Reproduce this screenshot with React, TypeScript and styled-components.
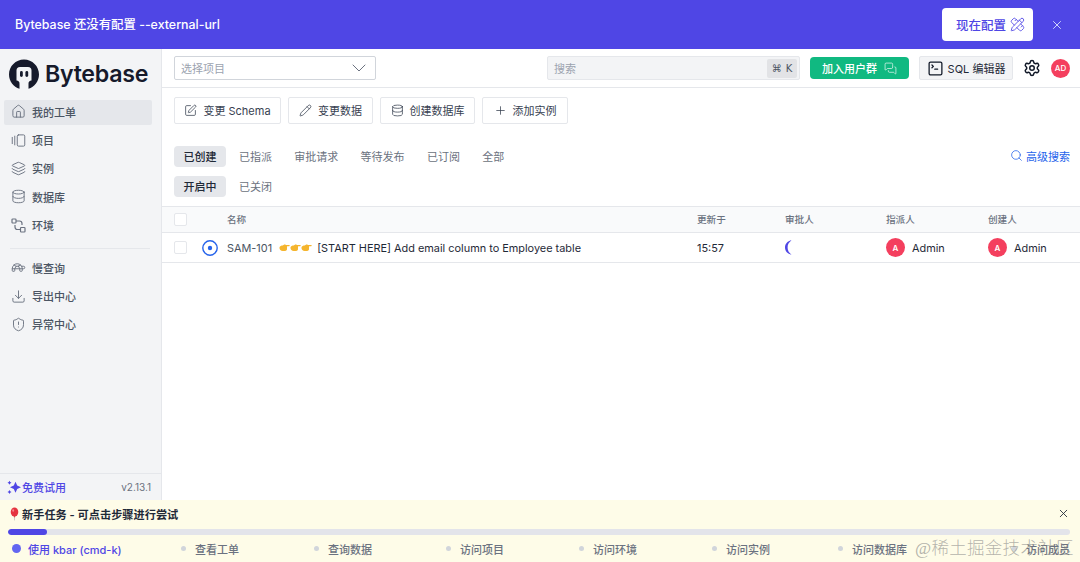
import React from "react";
import styled, { createGlobalStyle } from "styled-components";
import {
  House, GalleryHorizontalEnd, Layers, Database, Turtle, Download, ShieldAlert,
  SquarePen, Pencil, Plus, Search, ChevronDown, Settings, X, PencilRuler, MessagesSquare, SquareTerminal,
} from "lucide-react";

const Global = createGlobalStyle`
  html, body { margin: 0; padding: 0; height: 100%; background: #fff; }
  body { font-family: Inter, "Noto Sans CJK SC", sans-serif; color: #374151; overflow: hidden; }
  #root { height: 100%; }
  * { box-sizing: border-box; }
`;

const Page = styled.div`
  position: relative; width: 1080px; height: 562px; display: flex; flex-direction: column; overflow: hidden;
`;
const Banner = styled.div`
  height: 49px; flex: none; background: #4f46e5; color: #fff; display: flex; align-items: center;
  padding: 0 16px 2px 15px; font-size: 12.4px; font-weight: 500;
`;
const BannerText = styled.div`flex: 1;`;
const ConfigButton = styled.div`
  width: 91px; height: 33px; background: #fff; border-radius: 4px; color: #4f46e5; display: flex;
  align-items: center; justify-content: center; gap: 4px; font-size: 12.5px; font-weight: 500; margin-right: 17px; margin-top: 2px;
  padding-left: 6px;
`;
const BannerClose = styled.div`display: flex; margin-top: 2px; color: #e0e7ff;`;
const Body = styled.div`flex: 1; display: flex; min-height: 0;`;
const Sidebar = styled.aside`
  width: 162px; flex: none; background: #f3f4f6; border-right: 1px solid #e5e7eb; display: flex; flex-direction: column;
`;
const LogoRow = styled.div`
  height: 50.7px; display: flex; align-items: center; padding: 0 0 0 9px; gap: 6px; flex: none;
`;
const LogoText = styled.span`
  font-size: 23.2px; font-weight: 600; color: #161a2b; letter-spacing: -0.3px; line-height: 1;
`;
const Nav = styled.nav`display: flex; flex-direction: column; padding: 0 9px 0 4px; flex: 1;`;
const NavItem = styled.div<{ $active?: boolean }>`
  height: 25px; margin-bottom: 3.4px; display: flex; align-items: center; gap: 6px; padding: 0 0 1px 7px; border-radius: 2px;
  background: ${(p) => (p.$active ? "#e5e7eb" : "transparent")};
  font-size: 11px; font-weight: 500; color: #4b5563;
  svg { color: #6b7280; flex: none; }
`;
const NavDivider = styled.div`height: 1px; background: #e5e7eb; margin: 6px 2px 7px 6px;`;
const SideFooter = styled.div`
  height: 27px; flex: none; border-top: 1px solid #e5e7eb; display: flex; align-items: center; justify-content: space-between;
  padding: 0 10px 0 7px;
`;
const Trial = styled.span`
  display: flex; align-items: center; gap: 0; font-size: 11px; color: #4f46e5; font-weight: 500;
`;
const Version = styled.span`font-size: 10px; color: #6b7280;`;
const Main = styled.main`flex: 1; min-width: 0; display: flex; flex-direction: column;`;
const TopBar = styled.header`
  height: 39px; flex: none; border-bottom: 1px solid #e5e7eb; display: flex; align-items: center; padding: 0 10px 0 12px;
`;
const ProjectSelect = styled.div`
  width: 202px; height: 24px; border: 1px solid #d1d5db; border-radius: 2px; display: flex; align-items: center;
  justify-content: space-between; padding: 0 4px 0 6px; font-size: 11px; color: #9ca3af; background: #fff;
  svg { color: #6b7280; }
`;
const SearchBox = styled.div`
  width: 253px; height: 24px; margin-left: auto; border: 1px solid #e5e7eb; background: #f3f4f6; border-radius: 2px;
  display: flex; align-items: center; justify-content: space-between; padding: 0 2px 0 6px; font-size: 11px; color: #9ca3af;
`;
const Kbd = styled.span`
  width: 30px; height: 19px; background: #e2e3e6; border-radius: 2px; color: #4b5563; font-size: 10px; font-weight: 500;
  display: flex; align-items: center; justify-content: center; gap: 4px; font-family: "DejaVu Sans", sans-serif;
`;
const JoinButton = styled.div`
  width: 99px; height: 22px; margin-left: 10px; background: #10b981; color: #fff; border-radius: 4px; font-size: 11px; font-weight: 500;
  display: flex; align-items: center; justify-content: center; gap: 7px;
`;
const SqlButton = styled.div`
  width: 94px; height: 24px; margin-left: 10px; background: #f3f4f6; border: 1px solid #e5e7eb; border-radius: 2px; color: #1f2937;
  display: flex; align-items: center; justify-content: center; gap: 4px; font-size: 11px; font-weight: 400;
`;
const GearWrap = styled.div`display: flex; margin-left: 10px; color: #111827;`;
const HeaderAvatar = styled.div`
  width: 19px; height: 19px; margin-left: 10px; border-radius: 50%; background: #f43f5e; color: #fff; font-size: 8px; font-weight: 500;
  display: flex; align-items: center; justify-content: center;
`;
const Actions = styled.div`display: flex; gap: 7px; padding: 9px 0 0 12px; height: 58px; flex: none;`;
const ActionButton = styled.div<{ $w: number }>`
  width: ${(p) => p.$w}px; height: 27px; border: 1px solid #e5e7eb; border-radius: 2px; background: #fff; color: #374151;
  display: flex; align-items: center; justify-content: center; gap: 6px; font-size: 11px; font-weight: 400; padding-bottom: 1px;
  svg { color: #374151; flex: none; }
`;
const Tabs = styled.div`
  display: flex; align-items: center; height: 21px; padding: 0 10px 0 12px; gap: 13px; flex: none;
`;
const SubTabs = styled(Tabs)`margin-top: 9px;`;
const Tab = styled.div<{ $active?: boolean }>`
  height: 21px; padding: 0 ${(p) => (p.$active ? "9.5px" : "0")} 2px; border-radius: 4px; display: flex; align-items: center; font-size: 11px;
  font-weight: ${(p) => (p.$active ? 500 : 400)}; color: ${(p) => (p.$active ? "#1f2937" : "#6b7280")};
  background: ${(p) => (p.$active ? "#e5e7eb" : "transparent")};
  margin-right: ${(p) => (p.$active ? "0" : "9.3px")};
`;
const AdvancedSearch = styled.div`
  margin-left: auto; display: flex; align-items: center; gap: 3px; color: #2563eb; font-size: 11px; font-weight: 400; padding-bottom: 2px;
`;
const grid = "12px 41px 470px 88px 101px 102px 1fr";
const HeadRow = styled.div`
  margin-top: 9px; height: 27px; flex: none; display: grid; grid-template-columns: ${grid}; align-items: center; padding: 0 0 1px 12px;
  background: #f9fafb; border-top: 1px solid #e5e7eb; border-bottom: 1px solid #e5e7eb; font-size: 9.6px; font-weight: 500; color: #6b7280;
`;
const DataRow = styled.div`
  height: 30px; flex: none; display: grid; grid-template-columns: ${grid}; align-items: center; padding-left: 12px;
  border-bottom: 1px solid #e5e7eb; font-size: 10.9px; color: #1f2937; font-weight: 400;
`;
const Check = styled.span`
  width: 13px; height: 13px; border: 1px solid #e5e7eb; border-radius: 2px; background: #fff; display: block;
`;
const Name = styled.div`display: flex; align-items: center; white-space: nowrap;`;
const IssueId = styled.span`color: #4b5563; margin-right: 7px;`;
const Hands = styled.span`display: flex; margin-right: 2px;`;
const StatusCell = styled.div`display: flex; justify-content: flex-end; padding-right: 9px;`;
const Person = styled.div`display: flex; align-items: center; gap: 7px;`;
const RowAvatar = styled.span`
  width: 19px; height: 19px; border-radius: 50%; background: #f43f5e; color: #fff; font-size: 8px; font-weight: 600;
  display: flex; align-items: center; justify-content: center;
`;
const Quickstart = styled.section`
  height: 62px; flex: none; background: #fefce8; display: flex; flex-direction: column; padding: 0 10px 0 8px;
`;
const QuickHead = styled.div`
  height: 28px; display: flex; align-items: center; justify-content: space-between; font-size: 11.2px; font-weight: 600; color: #1f2937;
  padding-bottom: 1px; svg { color: #1f2937; }
`;
const QuickTitle = styled.span`display: flex; align-items: center; gap: 2px; padding-left: 1px;`;
const Progress = styled.div`height: 6px; border-radius: 3px; background: #e3e4ea; margin-top: 1px; overflow: hidden; flex: none;`;
const ProgressFill = styled.div`height: 100%; border-radius: 3px; background: #4f46e5;`;
const Steps = styled.div`display: flex; align-items: center; height: 27px; font-size: 11px; font-weight: 500; color: #6b7280;`;
const Step = styled.div<{ $w: number; $current?: boolean }>`
  width: ${(p) => p.$w}px; flex: none; display: flex; align-items: center; white-space: nowrap; gap: ${(p) => (p.$current ? "7px" : "9px")};
  color: ${(p) => (p.$current ? "#4f46e5" : "#6b7280")};
`;
const StepDot = styled.span<{ $current?: boolean }>`
  flex: none; border-radius: 50%; background: ${(p) => (p.$current ? "#6366f1" : "#d1d5db")};
  width: ${(p) => (p.$current ? "9px" : "5px")}; height: ${(p) => (p.$current ? "9px" : "5px")};
  margin-left: ${(p) => (p.$current ? "4px" : "0")};
`;
const Watermark = styled.div`
  position: absolute; left: 915px; top: 534px; font-family: "Liberation Serif", "Noto Sans CJK SC", serif; font-size: 17.5px;
  font-weight: 300; color: rgba(130, 130, 130, 0.6); white-space: nowrap; letter-spacing: 0.3px;
`;

const LogoMark = () => (
  <svg width="30" height="31" viewBox="0 0 30 31">
    <path d="M15 0.5C6.7 0.5 0 7.2 0 15.5c0 6.8 4.5 12.5 10.500 14.300V25a3 3 0 0 0-3-3.400V11.500a3.500 3.500 0 0 1 3.500-3.500h8a3.500 3.500 0 0 1 3.500 3.500v10a3 3 0 0 0-3 3.400v4.900C25.500 28 30 22.300 30 15.500 30 7.200 23.300 0.500 15 0.500Z" fill="#161a2b" />
    <rect x="11" y="12" width="2.800" height="6" rx="1.400" fill="#161a2b" />
    <rect x="16.400" y="12" width="2.800" height="6" rx="1.400" fill="#161a2b" />
  </svg>
);
const EnvIcon = () => (
  <svg width="15" height="15" viewBox="0 0 15 15" fill="none" stroke="currentColor" strokeWidth="1.200" strokeLinejoin="round">
    <rect x="1" y="1" width="4" height="4" rx="0.800" />
    <rect x="9.500" y="9.500" width="4.500" height="4.500" rx="0.800" />
    <path d="M5 3h3.500a2.500 2.500 0 0 1 2.500 2.500V7M9.500 11.500H6.500A2.500 2.500 0 0 1 4 9V7" />
  </svg>
);
const Sparkle = () => (
  <svg width="15" height="15" viewBox="0 0 15 15" fill="#4f46e5">
    <path d="M8.500 1.800l1.700 3.800 3.800 1.700-3.800 1.700-1.700 3.800-1.700-3.800-3.800-1.700 3.800-1.700z" />
    <path d="M2.500 0.800l.7 1.300 1.300.7-1.300.7-.7 1.300-.7-1.300-1.300-.7 1.300-.7zM2.500 10l.7 1.300 1.300.7-1.300.7-.7 1.300-.7-1.300-1.300-.7 1.300-.7z" />
  </svg>
);
const Hand = () => (
  <svg width="11" height="9" viewBox="0 0 12 9">
    <path d="M0.500 4.500C1 3 2.500 2.400 4 2.400c1-.6 1.800-1.300 2.600-1.500.5 0 .6.500.3 1h4.300c.7 0 .7 1 0 1.100H8.800l-.1 3.800c-.2 1-1 1.400-2 1.400H4C2 8.200 0.400 6.800 0.500 4.500Z" fill="#f5b52e" />
  </svg>
);
const Balloon = () => (
  <svg width="11" height="14" viewBox="0 0 11 14">
    <ellipse cx="5.500" cy="5" rx="3.800" ry="4.500" fill="#e5343f" />
    <path d="M4.800 9.300h1.400L6 10.400H5z" fill="#c92a35" />
    <path d="M5.500 10.400v3" stroke="#b7b7b7" strokeWidth="0.700" />
    <ellipse cx="4.200" cy="3.500" rx="0.900" ry="1.300" fill="#f58b90" />
  </svg>
);
const StatusIcon = () => (
  <svg width="16" height="16" viewBox="0 0 16 16">
    <circle cx="8" cy="8" r="7.200" fill="#fff" stroke="#2563eb" strokeWidth="1.400" />
    <circle cx="8" cy="8" r="2.200" fill="#2563eb" />
  </svg>
);
const Crescent = () => (
  <svg width="7" height="15" viewBox="0 0 7 15" style={{ display: "block" }}>
    <path d="M6.500 0.300C2.700 1 0 3.800 0 7.500s2.700 6.500 6.500 7.200C3.800 12.500 2.600 10.500 2.600 7.500S3.800 2.500 6.500 0.300Z" fill="#4f46e5" />
  </svg>
);

const nav = [
  { label: "项目", icon: <GalleryHorizontalEnd size={15} strokeWidth={1.500} /> },
  { label: "实例", icon: <Layers size={15} strokeWidth={1.500} /> },
  { label: "数据库", icon: <Database size={15} strokeWidth={1.500} /> },
  { label: "环境", icon: <EnvIcon /> },
];
const nav2 = [
  { label: "慢查询", icon: <Turtle size={15} strokeWidth={1.500} /> },
  { label: "导出中心", icon: <Download size={15} strokeWidth={1.500} /> },
  { label: "异常中心", icon: <ShieldAlert size={15} strokeWidth={1.500} /> },
];
const steps: [string, number][] = [
  ["查看工单", 133], ["查询数据", 132], ["访问项目", 133], ["访问环境", 133], ["访问实例", 126], ["访问数据库", 174], ["访问成员", 60],
];

export default function App() {
  return (
    <Page>
      <Global />
      <Banner>
        <BannerText>Bytebase 还没有配置 --external-url</BannerText>
        <ConfigButton>现在配置 <PencilRuler size={15} strokeWidth={1.400} /></ConfigButton>
        <BannerClose><X size={14} strokeWidth={1.500} /></BannerClose>
      </Banner>
      <Body>
        <Sidebar>
          <LogoRow><LogoMark /><LogoText>Bytebase</LogoText></LogoRow>
          <Nav>
            <NavItem $active><House size={15} strokeWidth={1.500} />我的工单</NavItem>
            {nav.map((n) => <NavItem key={n.label}>{n.icon}{n.label}</NavItem>)}
            <NavDivider />
            {nav2.map((n) => <NavItem key={n.label}>{n.icon}{n.label}</NavItem>)}
          </Nav>
          <SideFooter>
            <Trial><Sparkle />免费试用</Trial>
            <Version>v2.13.1</Version>
          </SideFooter>
        </Sidebar>
        <Main>
          <TopBar>
            <ProjectSelect>选择项目<ChevronDown size={24} strokeWidth={1} /></ProjectSelect>
            <SearchBox>搜索<Kbd><span>⌘</span><span>K</span></Kbd></SearchBox>
            <JoinButton>加入用户群<MessagesSquare size={13} strokeWidth={1.200} /></JoinButton>
            <SqlButton><SquareTerminal size={17} strokeWidth={1.800} color="#111827" />SQL 编辑器</SqlButton>
            <GearWrap><Settings size={18} strokeWidth={2} /></GearWrap>
            <HeaderAvatar>AD</HeaderAvatar>
          </TopBar>
          <Actions>
            <ActionButton $w={107}><SquarePen size={13} strokeWidth={1.400} />变更 Schema</ActionButton>
            <ActionButton $w={85}><Pencil size={13} strokeWidth={1.400} />变更数据</ActionButton>
            <ActionButton $w={95}><Database size={13} strokeWidth={1.400} />创建数据库</ActionButton>
            <ActionButton $w={86}><Plus size={13} strokeWidth={1.400} />添加实例</ActionButton>
          </Actions>
          <Tabs>
            <Tab $active>已创建</Tab>
            <Tab>已指派</Tab>
            <Tab>审批请求</Tab>
            <Tab>等待发布</Tab>
            <Tab>已订阅</Tab>
            <Tab>全部</Tab>
            <AdvancedSearch><Search size={13} strokeWidth={1.400} />高级搜索</AdvancedSearch>
          </Tabs>
          <SubTabs>
            <Tab $active>开启中</Tab>
            <Tab>已关闭</Tab>
          </SubTabs>
          <HeadRow>
            <Check /><span /><span>名称</span><span>更新于</span><span>审批人</span><span>指派人</span><span>创建人</span>
          </HeadRow>
          <DataRow>
            <Check />
            <StatusCell><StatusIcon /></StatusCell>
            <Name>
              <IssueId>SAM-101</IssueId>
              <Hands><Hand /><Hand /><Hand /></Hands>
              &nbsp;[START HERE] Add email column to Employee table
            </Name>
            <span>15:57</span>
            <span><Crescent /></span>
            <Person><RowAvatar>A</RowAvatar>Admin</Person>
            <Person><RowAvatar>A</RowAvatar>Admin</Person>
          </DataRow>
        </Main>
      </Body>
      <Quickstart>
        <QuickHead>
          <QuickTitle><Balloon />新手任务 - 可点击步骤进行尝试</QuickTitle>
          <X size={13} strokeWidth={1.600} />
        </QuickHead>
        <Progress><ProgressFill style={{ width: `${(1 / 27) * 100}%` }} /></Progress>
        <Steps>
          <Step $w={173} $current><StepDot $current />使用 kbar (cmd-k)</Step>
          {steps.map(([label, w]) => <Step key={label} $w={w}><StepDot />{label}</Step>)}
        </Steps>
      </Quickstart>
      <Watermark>@稀土掘金技术社区</Watermark>
    </Page>
  );
}
